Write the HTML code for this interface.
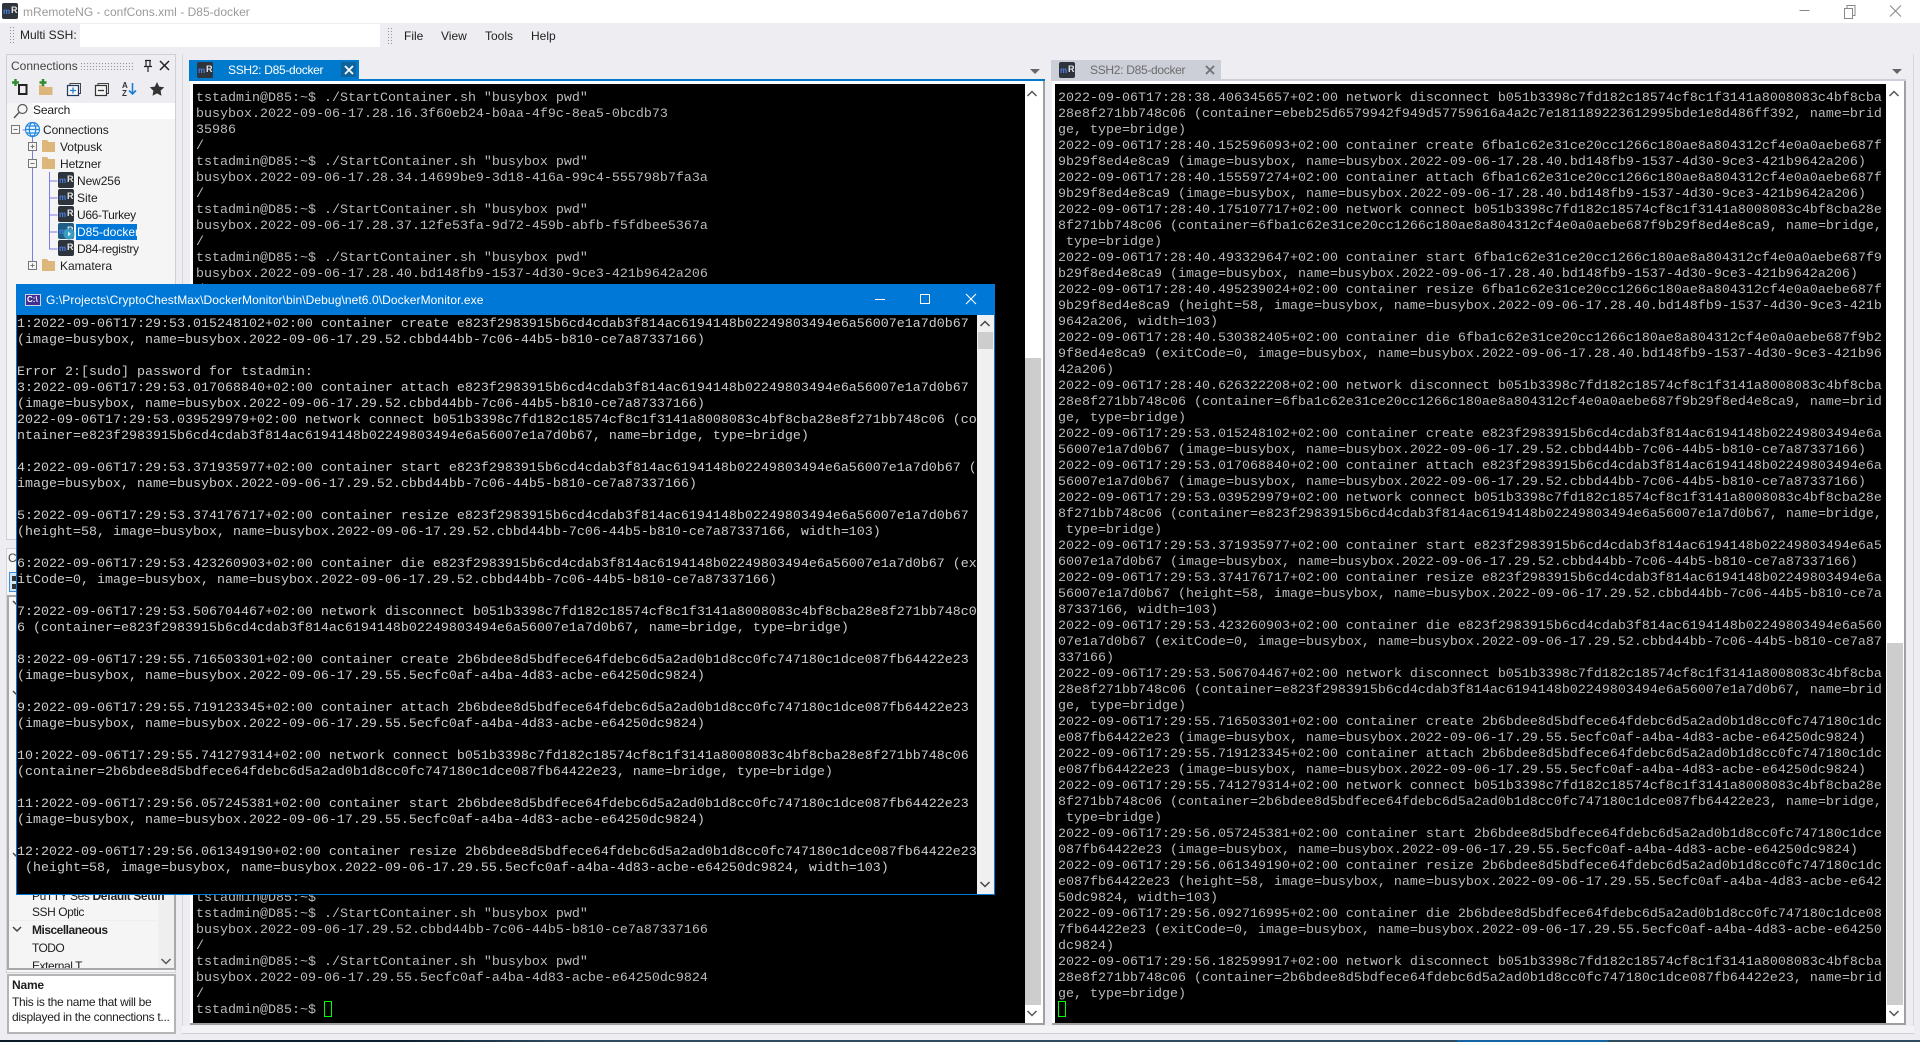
<!DOCTYPE html>
<html>
<head>
<meta charset="utf-8">
<title>mRemoteNG - confCons.xml - D85-docker</title>
<style>
html,body{margin:0;padding:0;width:1920px;height:1042px;overflow:hidden;background:#eeeef2;font-family:"Liberation Sans",sans-serif;font-size:12px;color:#1e1e1e}
div,span,pre,svg{position:absolute;margin:0;padding:0;box-sizing:border-box}
.l{white-space:nowrap;line-height:16px;height:16px}
.term{font:13.333px/16px "Liberation Mono",monospace;color:#bbb;white-space:pre}
.con{font:13.333px/16px "Liberation Mono",monospace;color:#ccc;white-space:pre}
.mr{width:16px;height:16px;background:#2e343c;border-radius:2px;overflow:hidden}
.mr i{position:absolute;left:1px;top:4px;font:bold 8px/10px "Liberation Sans",sans-serif;color:#4f7fe8;font-style:normal}
.mr b{position:absolute;left:9px;top:2px;font:bold 9px/11px "Liberation Sans",sans-serif;color:#e8e8e8}
.g{background-image:radial-gradient(#999 0.7px,transparent 0.8px);background-size:3px 3px}
</style>
</head>
<body>
<!-- title bar -->
<div style="left:0;top:0;width:1920px;height:23px;background:#fff"></div>
<div class="mr" style="left:2px;top:3px"><i>m</i><b>R</b></div>
<div class="l" style="left:23px;top:4px;color:#9a9a9a;font-size:12px;letter-spacing:.02px">mRemoteNG - confCons.xml - D85-docker</div>
<svg style="left:1795px;top:0" width="120" height="23" fill="none" stroke="#888" stroke-width="1">
<path d="M4.5 10.5H14.5"/>
<path d="M49.5 8.5h8v10h-8zM52 8V5.5h8v10h-2.5"/>
<path d="M95 5.5l11 11M106 5.5l-11 11"/>
</svg>

<!-- toolbar -->
<div class="g" style="left:9px;top:26px;width:5px;height:18px"></div>
<div class="l" style="left:20px;top:27px;font-size:12px">Multi SSH:</div>
<div style="left:80px;top:24px;width:300px;height:23px;background:#fff"></div>
<div class="g" style="left:387px;top:27px;width:5px;height:18px"></div>
<div class="l" style="left:404px;top:28px">File</div>
<div class="l" style="left:441px;top:28px">View</div>
<div class="l" style="left:485px;top:28px">Tools</div>
<div class="l" style="left:531px;top:28px">Help</div>

<!-- connections panel -->
<div style="left:6px;top:54px;width:170px;height:486px;background:#f5f5f5;border:1px solid #cfcfd6"></div>
<div style="left:7px;top:55px;width:168px;height:48px;background:#eeeef2"></div>
<div class="l" style="left:11px;top:58px;color:#444">Connections</div>
<div class="g" style="left:80px;top:62px;width:54px;height:8px"></div>
<svg style="left:140px;top:58px" width="32" height="16" fill="none" stroke="#222" stroke-width="1.2">
<path d="M5 2.5h6M6 2.5v6h4v-6M4 8.5h8M8 9v5"/>
<path d="M20 3l9 9M29 3l-9 9" stroke-width="1.5"/>
</svg>
<svg style="left:10px;top:78px" width="160" height="22" fill="none">
<rect x="9" y="7" width="7.5" height="9" stroke="#222" stroke-width="2"/>
<path d="M5.500 1v7M2 4.500h7" stroke="#2e8b2e" stroke-width="2.400"/>
<path d="M29 7h5l1.500 2h7v8h-13.500z" fill="#dcb67a"/>
<path d="M33 1v7M29.500 4.500h7" stroke="#2e8b2e" stroke-width="2.400"/>
<rect x="57.500" y="7.500" width="11" height="10" stroke="#1f3a5f" stroke-width="1.200" fill="#f5f5f5"/>
<path d="M60 7V5.500h10.500v10H69" stroke="#444"/>
<path d="M60 12.500h6M63 9.500v6" stroke="#1e7fd0" stroke-width="1.300"/>
<rect x="85.500" y="7.500" width="11" height="10" stroke="#333" stroke-width="1.200" fill="#f5f5f5"/>
<path d="M88 7V5.500h10.500v10H97" stroke="#444"/>
<path d="M88 12.500h6" stroke="#333" stroke-width="1.300"/>
<path d="M122.500 5v11M119 12.500l3.500 3.500 3.500-3.500" stroke="#1e7fd0" stroke-width="1.600"/>
<path d="M147 4l2.200 4.600 5 .7-3.600 3.500.9 5-4.500-2.400-4.500 2.400.9-5-3.600-3.500 5-.7z" fill="#333"/>
</svg>
<div style="left:122px;top:82px;font:bold 8px/8px 'Liberation Sans',sans-serif;color:#333">A</div>
<div style="left:122px;top:90px;font:bold 8px/8px 'Liberation Sans',sans-serif;color:#333">Z</div>
<div style="left:33px;top:103px;width:142px;height:16px;background:#fff"></div>
<div class="l" style="left:33px;top:102px;font-size:12px;letter-spacing:-.15px">Search</div>
<svg style="left:12px;top:103px" width="20" height="16" fill="none" stroke="#555" stroke-width="1.200"><circle cx="10.500" cy="6" r="4.500"/><path d="M7 9.500L2 15" stroke-width="1.500"/></svg>

<!-- tree -->
<svg style="left:8px;top:120px" width="100" height="155" fill="none" stroke="#7d7dea">
<path d="M14.500 10h3M24.500 15V147M24.500 27h2M24.500 44h2M24.500 146h2M41.500 52V129.500M41.500 61h8M41.500 78h8M41.500 95h8M41.500 112h8M41.500 129h8"/>
</svg>
<svg style="left:8px;top:120px" width="60" height="155" fill="#f5f5f5" stroke="#777">
<rect x="3.500" y="5.500" width="8" height="8"/><path d="M5.500 9.500h4"/>
<rect x="20.500" y="22.500" width="8" height="8"/><path d="M22.500 26.500h4M24.500 24.500v4"/>
<rect x="20.500" y="39.500" width="8" height="8"/><path d="M22.500 43.500h4"/>
<rect x="20.500" y="141.500" width="8" height="8"/><path d="M22.500 145.500h4M24.500 143.500v4"/>
</svg>
<svg style="left:24px;top:121px" width="18" height="18" fill="none" stroke="#1e88e5" stroke-width="1.200"><circle cx="8.500" cy="8.500" r="7"/><ellipse cx="8.500" cy="8.500" rx="3.200" ry="7"/><path d="M1.500 8.500h14M2.500 5h12M2.500 12h12"/></svg>
<svg style="left:42px;top:138px" width="14" height="140" fill="#dcb67a">
<path d="M0 2h5l1.500 2H13v10H0z"/><path d="M0 19h5l1.500 2H13v10H0z"/><path d="M0 121h5l1.500 2H13v10H0z"/>
</svg>
<div class="l" style="left:43px;top:122px;letter-spacing:-.1px">Connections</div>
<div class="l" style="left:60px;top:139px;letter-spacing:-.1px">Votpusk</div>
<div class="l" style="left:60px;top:156px;letter-spacing:-.1px">Hetzner</div>
<div class="mr" style="left:58px;top:172px"><i>m</i><b>R</b></div>
<div class="l" style="left:77px;top:173px;letter-spacing:-.1px">New256</div>
<div class="mr" style="left:58px;top:189px"><i>m</i><b>R</b></div>
<div class="l" style="left:77px;top:190px">Site</div>
<div class="mr" style="left:58px;top:206px"><i>m</i><b>R</b></div>
<div class="l" style="left:77px;top:207px;letter-spacing:-.35px">U66-Turkey</div>
<div class="mr" style="left:58px;top:223px;background:#1f5f86"><i>m</i><b>R</b></div>
<svg style="left:63px;top:227px" width="12" height="13"><circle cx="6" cy="7" r="5.500" fill="#3a9cc0"/><path d="M5 4.500l3 2.500-3 2.500z" fill="#d5eef7"/></svg>
<div style="left:76px;top:224px;width:61px;height:16px;background:#0078d7"></div>
<div class="l" style="left:77px;top:224px;color:#fff">D85-docker</div>
<div class="mr" style="left:58px;top:240px"><i>m</i><b>R</b></div>
<div class="l" style="left:77px;top:241px;letter-spacing:-.3px">D84-registry</div>
<div class="l" style="left:60px;top:258px">Kamatera</div>

<!-- config panel -->
<div style="left:6px;top:548px;width:170px;height:425px;background:#f5f5f5;border:1px solid #d4d4da"></div>
<div style="left:8px;top:550px;font-size:12px;line-height:16px;color:#444">C</div>
<div style="left:9px;top:572px;width:20px;height:20px;border:1px solid #3a8fd8;background:#cfe4f7"></div>
<div style="left:12px;top:576px;width:4px;height:5px;background:#333"></div>
<div style="left:12px;top:584px;width:4px;height:5px;background:#333"></div>
<div style="left:7px;top:595px;width:169px;height:375px;background:#f5f5f5;border:2px solid #a8a8a8"></div>
<div style="left:158px;top:597px;width:16px;height:371px;background:#efefef"></div>
<svg style="left:8px;top:597px" width="20" height="350" fill="none" stroke="#444" stroke-width="1.500"><path d="M5 4l4 4 4-4M5 94l4 4 4-4M5 256l4 4 4-4M5 330l4 4 4-4"/></svg>
<div class="l" style="left:32px;top:888px;letter-spacing:-.4px">PuTTY Ses <b style="position:static">Default Settin</b></div>
<div class="l" style="left:32px;top:904px;letter-spacing:-.45px">SSH Optic</div>
<div style="left:9px;top:920px;width:148px;height:1px;background:#eee"></div>
<div class="l" style="left:32px;top:922px;font-weight:bold;letter-spacing:-.5px">Miscellaneous</div>
<div class="l" style="left:32px;top:940px;letter-spacing:-.6px">TODO</div>
<div style="left:32px;top:958px;width:120px;height:10px;overflow:hidden"><div class="l" style="left:0;top:0;letter-spacing:-.45px">External T</div></div>
<svg style="left:160px;top:956px" width="12" height="12" fill="none" stroke="#555" stroke-width="1.500"><path d="M1.500 3l4.500 4.500L10.500 3"/></svg>
<div style="left:7px;top:974px;width:169px;height:60px;background:#fff;border:2px solid #b4b4b4"></div>
<div class="l" style="left:12px;top:977px;font-weight:bold;letter-spacing:-.2px">Name</div>
<div class="l" style="left:12px;top:994px;font-size:12px;letter-spacing:-.3px">This is the name that will be</div>
<div class="l" style="left:12px;top:1009px;font-size:12px;letter-spacing:-.3px">displayed in the connections t...</div>

<!-- main document area -->
<div style="left:182px;top:54px;width:1px;height:980px;background:#d6d6dc"></div>
<div style="left:1913px;top:54px;width:1px;height:980px;background:#d6d6dc"></div>
<div style="left:182px;top:1026px;width:1732px;height:8px;background:#f3f3f6;border-bottom:1px solid #cfcfd4"></div>

<!-- left tab -->
<div style="left:189px;top:60px;width:170px;height:19px;background:#007acc"></div>
<div style="left:189px;top:79px;width:856px;height:2px;background:#007acc"></div>
<div class="mr" style="left:197px;top:62px"><i>m</i><b>R</b></div>
<div class="l" style="left:228px;top:62px;color:#fff;letter-spacing:-.3px">SSH2: D85-docker</div>
<div style="left:341px;top:62px;width:15px;height:15px;background:#0e639c"></div>
<svg style="left:344px;top:65px" width="10" height="10" stroke="#fff" stroke-width="1.800"><path d="M1 1l8 8M9 1l-8 8"/></svg>
<svg style="left:1029px;top:66px" width="12" height="10" fill="#666"><path d="M1 3h10L6 8z"/></svg>

<!-- left terminal -->
<div style="left:190px;top:81px;width:855px;height:944px;background:#fff;border-right:2px solid #a0a0a0;border-bottom:2px solid #a0a0a0"></div>
<div style="left:193px;top:84px;width:832px;height:939px;background:#000"></div>
<div style="left:1025px;top:358px;width:16px;height:647px;background:#cdcdcd"></div>
<svg style="left:1026px;top:88px" width="12" height="12" fill="none" stroke="#555" stroke-width="1.500"><path d="M1.500 8L6 3.500 10.500 8"/></svg>
<svg style="left:1026px;top:1008px" width="12" height="12" fill="none" stroke="#555" stroke-width="1.500"><path d="M1.500 3L6 7.500 10.500 3"/></svg>
<pre class="term" style="left:196px;top:91px">tstadmin@D85:~$ ./StartContainer.sh "busybox pwd"
busybox.2022-09-06-17.28.16.3f60eb24-b0aa-4f9c-8ea5-0bcdb73
35986
/
tstadmin@D85:~$ ./StartContainer.sh "busybox pwd"
busybox.2022-09-06-17.28.34.14699be9-3d18-416a-99c4-555798b7fa3a
/
tstadmin@D85:~$ ./StartContainer.sh "busybox pwd"
busybox.2022-09-06-17.28.37.12fe53fa-9d72-459b-abfb-f5fdbee5367a
/
tstadmin@D85:~$ ./StartContainer.sh "busybox pwd"
busybox.2022-09-06-17.28.40.bd148fb9-1537-4d30-9ce3-421b9642a206
/</pre>
<pre class="term" style="left:196px;top:891px">tstadmin@D85:~$
tstadmin@D85:~$ ./StartContainer.sh "busybox pwd"
busybox.2022-09-06-17.29.52.cbbd44bb-7c06-44b5-b810-ce7a87337166
/
tstadmin@D85:~$ ./StartContainer.sh "busybox pwd"
busybox.2022-09-06-17.29.55.5ecfc0af-a4ba-4d83-acbe-e64250dc9824
/
tstadmin@D85:~$ </pre>
<div style="left:324px;top:1001px;width:8px;height:16px;border:1px solid #00ff00"></div>

<!-- right tab -->
<div style="left:1051px;top:60px;width:170px;height:19px;background:#ccced8"></div>
<div style="left:1051px;top:79px;width:855px;height:2px;background:#ccced8"></div>
<div class="mr" style="left:1059px;top:62px"><i>m</i><b>R</b></div>
<div class="l" style="left:1090px;top:62px;color:#6d6d6d;letter-spacing:-.3px">SSH2: D85-docker</div>
<svg style="left:1205px;top:65px" width="10" height="10" stroke="#717171" stroke-width="1.800"><path d="M1 1l8 8M9 1l-8 8"/></svg>
<svg style="left:1891px;top:66px" width="12" height="10" fill="#666"><path d="M1 3h10L6 8z"/></svg>

<!-- right terminal -->
<div style="left:1052px;top:81px;width:854px;height:944px;background:#fff;border-right:2px solid #a0a0a0;border-bottom:2px solid #a0a0a0"></div>
<div style="left:1055px;top:84px;width:831px;height:939px;background:#000"></div>
<div style="left:1887px;top:643px;width:16px;height:362px;background:#cdcdcd"></div>
<svg style="left:1888px;top:88px" width="12" height="12" fill="none" stroke="#555" stroke-width="1.500"><path d="M1.500 8L6 3.500 10.500 8"/></svg>
<svg style="left:1888px;top:1008px" width="12" height="12" fill="none" stroke="#555" stroke-width="1.500"><path d="M1.500 3L6 7.500 10.500 3"/></svg>
<pre class="term" style="left:1058px;top:91px">2022-09-06T17:28:38.406345657+02:00 network disconnect b051b3398c7fd182c18574cf8c1f3141a8008083c4bf8cba
28e8f271bb748c06 (container=ebeb25d6579942f949d57759616a4a2c7e181189223612995bde1e8d486ff392, name=brid
ge, type=bridge)
2022-09-06T17:28:40.152596093+02:00 container create 6fba1c62e31ce20cc1266c180ae8a804312cf4e0a0aebe687f
9b29f8ed4e8ca9 (image=busybox, name=busybox.2022-09-06-17.28.40.bd148fb9-1537-4d30-9ce3-421b9642a206)
2022-09-06T17:28:40.155597274+02:00 container attach 6fba1c62e31ce20cc1266c180ae8a804312cf4e0a0aebe687f
9b29f8ed4e8ca9 (image=busybox, name=busybox.2022-09-06-17.28.40.bd148fb9-1537-4d30-9ce3-421b9642a206)
2022-09-06T17:28:40.175107717+02:00 network connect b051b3398c7fd182c18574cf8c1f3141a8008083c4bf8cba28e
8f271bb748c06 (container=6fba1c62e31ce20cc1266c180ae8a804312cf4e0a0aebe687f9b29f8ed4e8ca9, name=bridge,
 type=bridge)
2022-09-06T17:28:40.493329647+02:00 container start 6fba1c62e31ce20cc1266c180ae8a804312cf4e0a0aebe687f9
b29f8ed4e8ca9 (image=busybox, name=busybox.2022-09-06-17.28.40.bd148fb9-1537-4d30-9ce3-421b9642a206)
2022-09-06T17:28:40.495239024+02:00 container resize 6fba1c62e31ce20cc1266c180ae8a804312cf4e0a0aebe687f
9b29f8ed4e8ca9 (height=58, image=busybox, name=busybox.2022-09-06-17.28.40.bd148fb9-1537-4d30-9ce3-421b
9642a206, width=103)
2022-09-06T17:28:40.530382405+02:00 container die 6fba1c62e31ce20cc1266c180ae8a804312cf4e0a0aebe687f9b2
9f8ed4e8ca9 (exitCode=0, image=busybox, name=busybox.2022-09-06-17.28.40.bd148fb9-1537-4d30-9ce3-421b96
42a206)
2022-09-06T17:28:40.626322208+02:00 network disconnect b051b3398c7fd182c18574cf8c1f3141a8008083c4bf8cba
28e8f271bb748c06 (container=6fba1c62e31ce20cc1266c180ae8a804312cf4e0a0aebe687f9b29f8ed4e8ca9, name=brid
ge, type=bridge)
2022-09-06T17:29:53.015248102+02:00 container create e823f2983915b6cd4cdab3f814ac6194148b02249803494e6a
56007e1a7d0b67 (image=busybox, name=busybox.2022-09-06-17.29.52.cbbd44bb-7c06-44b5-b810-ce7a87337166)
2022-09-06T17:29:53.017068840+02:00 container attach e823f2983915b6cd4cdab3f814ac6194148b02249803494e6a
56007e1a7d0b67 (image=busybox, name=busybox.2022-09-06-17.29.52.cbbd44bb-7c06-44b5-b810-ce7a87337166)
2022-09-06T17:29:53.039529979+02:00 network connect b051b3398c7fd182c18574cf8c1f3141a8008083c4bf8cba28e
8f271bb748c06 (container=e823f2983915b6cd4cdab3f814ac6194148b02249803494e6a56007e1a7d0b67, name=bridge,
 type=bridge)
2022-09-06T17:29:53.371935977+02:00 container start e823f2983915b6cd4cdab3f814ac6194148b02249803494e6a5
6007e1a7d0b67 (image=busybox, name=busybox.2022-09-06-17.29.52.cbbd44bb-7c06-44b5-b810-ce7a87337166)
2022-09-06T17:29:53.374176717+02:00 container resize e823f2983915b6cd4cdab3f814ac6194148b02249803494e6a
56007e1a7d0b67 (height=58, image=busybox, name=busybox.2022-09-06-17.29.52.cbbd44bb-7c06-44b5-b810-ce7a
87337166, width=103)
2022-09-06T17:29:53.423260903+02:00 container die e823f2983915b6cd4cdab3f814ac6194148b02249803494e6a560
07e1a7d0b67 (exitCode=0, image=busybox, name=busybox.2022-09-06-17.29.52.cbbd44bb-7c06-44b5-b810-ce7a87
337166)
2022-09-06T17:29:53.506704467+02:00 network disconnect b051b3398c7fd182c18574cf8c1f3141a8008083c4bf8cba
28e8f271bb748c06 (container=e823f2983915b6cd4cdab3f814ac6194148b02249803494e6a56007e1a7d0b67, name=brid
ge, type=bridge)
2022-09-06T17:29:55.716503301+02:00 container create 2b6bdee8d5bdfece64fdebc6d5a2ad0b1d8cc0fc747180c1dc
e087fb64422e23 (image=busybox, name=busybox.2022-09-06-17.29.55.5ecfc0af-a4ba-4d83-acbe-e64250dc9824)
2022-09-06T17:29:55.719123345+02:00 container attach 2b6bdee8d5bdfece64fdebc6d5a2ad0b1d8cc0fc747180c1dc
e087fb64422e23 (image=busybox, name=busybox.2022-09-06-17.29.55.5ecfc0af-a4ba-4d83-acbe-e64250dc9824)
2022-09-06T17:29:55.741279314+02:00 network connect b051b3398c7fd182c18574cf8c1f3141a8008083c4bf8cba28e
8f271bb748c06 (container=2b6bdee8d5bdfece64fdebc6d5a2ad0b1d8cc0fc747180c1dce087fb64422e23, name=bridge,
 type=bridge)
2022-09-06T17:29:56.057245381+02:00 container start 2b6bdee8d5bdfece64fdebc6d5a2ad0b1d8cc0fc747180c1dce
087fb64422e23 (image=busybox, name=busybox.2022-09-06-17.29.55.5ecfc0af-a4ba-4d83-acbe-e64250dc9824)
2022-09-06T17:29:56.061349190+02:00 container resize 2b6bdee8d5bdfece64fdebc6d5a2ad0b1d8cc0fc747180c1dc
e087fb64422e23 (height=58, image=busybox, name=busybox.2022-09-06-17.29.55.5ecfc0af-a4ba-4d83-acbe-e642
50dc9824, width=103)
2022-09-06T17:29:56.092716995+02:00 container die 2b6bdee8d5bdfece64fdebc6d5a2ad0b1d8cc0fc747180c1dce08
7fb64422e23 (exitCode=0, image=busybox, name=busybox.2022-09-06-17.29.55.5ecfc0af-a4ba-4d83-acbe-e64250
dc9824)
2022-09-06T17:29:56.182599917+02:00 network disconnect b051b3398c7fd182c18574cf8c1f3141a8008083c4bf8cba
28e8f271bb748c06 (container=2b6bdee8d5bdfece64fdebc6d5a2ad0b1d8cc0fc747180c1dce087fb64422e23, name=brid
ge, type=bridge)</pre>
<div style="left:1058px;top:1001px;width:8px;height:16px;border:1px solid #00ff00"></div>

<!-- console window -->
<div style="left:16px;top:284px;width:979px;height:611px;background:#000;border:1px solid #0078d7"></div>
<div style="left:16px;top:284px;width:979px;height:31px;background:#0078d7"></div>
<div style="left:25px;top:294px;width:16px;height:12px;background:#3f2f8f;border:1px solid #cfcfe8;overflow:hidden"></div>
<div style="left:27px;top:295px;font:bold 8px/10px 'Liberation Sans',sans-serif;color:#fff">C:\</div>
<div class="l" style="left:46px;top:292px;color:#fff;font-size:12px;letter-spacing:.08px">G:\Projects\CryptoChestMax\DockerMonitor\bin\Debug\net6.0\DockerMonitor.exe</div>
<svg style="left:870px;top:288px" width="115" height="22" fill="none" stroke="#fff" stroke-width="1">
<path d="M5 11.500H15"/>
<rect x="50.500" y="6.500" width="9" height="9"/>
<path d="M96 6l10 10M106 6l-10 10" stroke-width="1.100"/>
</svg>
<pre class="con" style="left:17px;top:317px">1:2022-09-06T17:29:53.015248102+02:00 container create e823f2983915b6cd4cdab3f814ac6194148b02249803494e6a56007e1a7d0b67
(image=busybox, name=busybox.2022-09-06-17.29.52.cbbd44bb-7c06-44b5-b810-ce7a87337166)

Error 2:[sudo] password for tstadmin:
3:2022-09-06T17:29:53.017068840+02:00 container attach e823f2983915b6cd4cdab3f814ac6194148b02249803494e6a56007e1a7d0b67
(image=busybox, name=busybox.2022-09-06-17.29.52.cbbd44bb-7c06-44b5-b810-ce7a87337166)
2022-09-06T17:29:53.039529979+02:00 network connect b051b3398c7fd182c18574cf8c1f3141a8008083c4bf8cba28e8f271bb748c06 (co
ntainer=e823f2983915b6cd4cdab3f814ac6194148b02249803494e6a56007e1a7d0b67, name=bridge, type=bridge)

4:2022-09-06T17:29:53.371935977+02:00 container start e823f2983915b6cd4cdab3f814ac6194148b02249803494e6a56007e1a7d0b67 (
image=busybox, name=busybox.2022-09-06-17.29.52.cbbd44bb-7c06-44b5-b810-ce7a87337166)

5:2022-09-06T17:29:53.374176717+02:00 container resize e823f2983915b6cd4cdab3f814ac6194148b02249803494e6a56007e1a7d0b67
(height=58, image=busybox, name=busybox.2022-09-06-17.29.52.cbbd44bb-7c06-44b5-b810-ce7a87337166, width=103)

6:2022-09-06T17:29:53.423260903+02:00 container die e823f2983915b6cd4cdab3f814ac6194148b02249803494e6a56007e1a7d0b67 (ex
itCode=0, image=busybox, name=busybox.2022-09-06-17.29.52.cbbd44bb-7c06-44b5-b810-ce7a87337166)

7:2022-09-06T17:29:53.506704467+02:00 network disconnect b051b3398c7fd182c18574cf8c1f3141a8008083c4bf8cba28e8f271bb748c0
6 (container=e823f2983915b6cd4cdab3f814ac6194148b02249803494e6a56007e1a7d0b67, name=bridge, type=bridge)

8:2022-09-06T17:29:55.716503301+02:00 container create 2b6bdee8d5bdfece64fdebc6d5a2ad0b1d8cc0fc747180c1dce087fb64422e23
(image=busybox, name=busybox.2022-09-06-17.29.55.5ecfc0af-a4ba-4d83-acbe-e64250dc9824)

9:2022-09-06T17:29:55.719123345+02:00 container attach 2b6bdee8d5bdfece64fdebc6d5a2ad0b1d8cc0fc747180c1dce087fb64422e23
(image=busybox, name=busybox.2022-09-06-17.29.55.5ecfc0af-a4ba-4d83-acbe-e64250dc9824)

10:2022-09-06T17:29:55.741279314+02:00 network connect b051b3398c7fd182c18574cf8c1f3141a8008083c4bf8cba28e8f271bb748c06
(container=2b6bdee8d5bdfece64fdebc6d5a2ad0b1d8cc0fc747180c1dce087fb64422e23, name=bridge, type=bridge)

11:2022-09-06T17:29:56.057245381+02:00 container start 2b6bdee8d5bdfece64fdebc6d5a2ad0b1d8cc0fc747180c1dce087fb64422e23
(image=busybox, name=busybox.2022-09-06-17.29.55.5ecfc0af-a4ba-4d83-acbe-e64250dc9824)

12:2022-09-06T17:29:56.061349190+02:00 container resize 2b6bdee8d5bdfece64fdebc6d5a2ad0b1d8cc0fc747180c1dce087fb64422e23
 (height=58, image=busybox, name=busybox.2022-09-06-17.29.55.5ecfc0af-a4ba-4d83-acbe-e64250dc9824, width=103)</pre>
<div style="left:977px;top:315px;width:17px;height:579px;background:#f0f0f0"></div>
<div style="left:978px;top:332px;width:15px;height:17px;background:#cdcdcd"></div>
<svg style="left:979px;top:318px" width="12" height="12" fill="none" stroke="#444" stroke-width="1.500"><path d="M1.500 8L6 3.500 10.500 8"/></svg>
<svg style="left:979px;top:879px" width="12" height="12" fill="none" stroke="#444" stroke-width="1.500"><path d="M1.500 3L6 7.500 10.500 3"/></svg>

<!-- taskbar sliver -->
<div style="left:0;top:1040px;width:1920px;height:2px;background:linear-gradient(90deg,#0a1a26 0,#0c2030 400px,#2f4b5e 560px,#2f4b5e 100%)"></div>
<div style="left:1457px;top:1040px;width:151px;height:2px;background:#1565a5"></div>
</body>
</html>
